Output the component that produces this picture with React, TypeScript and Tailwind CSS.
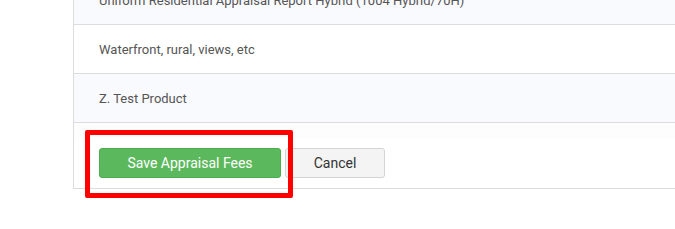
export default function App() {
  const rows = [
    { label: "Uniform Residential Appraisal Report Hybrid (1004 Hybrid/70H)", shaded: true },
    { label: "Waterfront, rural, views, etc", shaded: false },
    { label: "Z. Test Product", shaded: true },
  ]

  return (
    <div className="h-[229px] w-[675px] overflow-hidden bg-white font-['Roboto',sans-serif]">
      <div className="ml-[73px] -mt-[24px] w-[700px] border-l border-[#dcdcdc]">
        {rows.map((row, i) => (
          <div
            key={i}
            className={`flex h-[49px] items-center border-b border-[#dcdcdc] pl-[25px] pt-[2px] text-[13px] text-[#555] ${
              row.shaded ? "bg-[#f9fafd]" : "bg-white"
            }`}
          >
            {row.label}
          </div>
        ))}
        <div className="relative border-b border-[#dcdcdc] bg-[linear-gradient(#fdfdfd_0px,#fdfdfd_16px,#ffffff_16px)] pb-[10px] pl-[25px] pt-[25px]">
          <div className="flex gap-[4px]">
            <button
              type="button"
              className="h-[30px] w-[182px] rounded-[3px] border border-[#4cae4c] bg-[#5cb85c] text-[14px] text-white"
            >
              Save Appraisal Fees
            </button>
            <button
              type="button"
              className="h-[30px] w-[100px] rounded-[3px] border border-[#d4d4d4] bg-[#f4f4f4] text-[14px] text-[#333]"
            >
              Cancel
            </button>
          </div>
          <div className="pointer-events-none absolute left-[11px] top-[7px] h-[68px] w-[208px] rounded-[2px] border-[5px] border-[#ff0000]" />
        </div>
      </div>
    </div>
  )
}
